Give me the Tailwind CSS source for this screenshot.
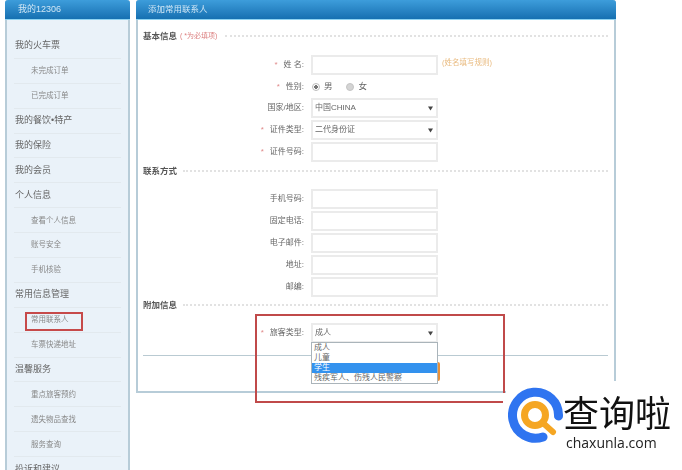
<!DOCTYPE html>
<html lang="zh-CN">
<head>
  <meta charset="UTF-8" />
  <title>添加常用联系人</title>
  <script src="https://cdn.jsdelivr.net/npm/@tailwindcss/browser@4"></script>
</head>
<body class="bg-white font-['Liberation_Sans','Noto_Sans_CJK_SC',sans-serif] text-[8px] text-[#666]">
  <div class="relative w-[682px] h-[470px] overflow-hidden">
    <div class="flex items-start gap-[6px] pl-[5px] blur-[0.55px]">

      <!-- sidebar -->
      <aside class="w-[125px] h-[500px] shrink-0 bg-[#eaf2f9] border-x-2 border-[#b7ccd8] rounded-t-[3px]">
        <div class="-mx-[2px] h-[19px] pl-[13px] flex items-center rounded-t-[3px] bg-gradient-to-b from-[#3d9ddb] to-[#1570b1] text-[9px] text-[#cfe6f5]">我的12306</div>
        <div class="h-[1px] -mx-[2px] bg-[#8fd4f2]"></div>
        <ul class="pt-[14px] px-[7px]">
          <li class="h-[24.9px] flex items-center pl-[1px] text-[9px] border-b border-[#e2e9ee]">我的火车票</li>
          <li class="h-[24.9px] flex items-center pl-[17px] text-[7.5px] text-[#888] border-b border-[#e2e9ee]">未完成订单</li>
          <li class="h-[24.9px] flex items-center pl-[17px] text-[7.5px] text-[#888] border-b border-[#e2e9ee]">已完成订单</li>
          <li class="h-[24.9px] flex items-center pl-[1px] text-[9px] border-b border-[#e2e9ee]">我的餐饮•特产</li>
          <li class="h-[24.9px] flex items-center pl-[1px] text-[9px] border-b border-[#e2e9ee]">我的保险</li>
          <li class="h-[24.9px] flex items-center pl-[1px] text-[9px] border-b border-[#e2e9ee]">我的会员</li>
          <li class="h-[24.9px] flex items-center pl-[1px] text-[9px] border-b border-[#e2e9ee]">个人信息</li>
          <li class="h-[24.9px] flex items-center pl-[17px] text-[7.5px] text-[#888] border-b border-[#e2e9ee]">查看个人信息</li>
          <li class="h-[24.9px] flex items-center pl-[17px] text-[7.5px] text-[#888] border-b border-[#e2e9ee]">账号安全</li>
          <li class="h-[24.9px] flex items-center pl-[17px] text-[7.5px] text-[#888] border-b border-[#e2e9ee]">手机核验</li>
          <li class="h-[24.9px] flex items-center pl-[1px] text-[9px] border-b border-[#e2e9ee]">常用信息管理</li>
          <li class="h-[24.9px] flex items-center pl-[17px] text-[7.5px] text-[#888] border-b border-[#e2e9ee]">常用联系人</li>
          <li class="h-[24.9px] flex items-center pl-[17px] text-[7.5px] text-[#888] border-b border-[#e2e9ee]">车票快递地址</li>
          <li class="h-[24.9px] flex items-center pl-[1px] text-[9px] border-b border-[#e2e9ee]">温馨服务</li>
          <li class="h-[24.9px] flex items-center pl-[17px] text-[7.5px] text-[#888] border-b border-[#e2e9ee]">重点旅客预约</li>
          <li class="h-[24.9px] flex items-center pl-[17px] text-[7.5px] text-[#888] border-b border-[#e2e9ee]">遗失物品查找</li>
          <li class="h-[24.9px] flex items-center pl-[17px] text-[7.5px] text-[#888] border-b border-[#e2e9ee]">服务查询</li>
          <li class="h-[24.9px] flex items-center pl-[1px] text-[9px]">投诉和建议</li>
        </ul>
      </aside>

      <!-- main panel -->
      <main class="w-[480px] h-[393px] shrink-0 border-x-2 border-b-2 border-[#b7ccd8] rounded-t-[3px]">
        <div class="-mx-[2px] h-[19px] pl-[12px] flex items-center rounded-t-[3px] bg-gradient-to-b from-[#3d9ddb] to-[#1570b1] text-[8.5px] text-[#cfe6f5]">添加常用联系人</div>
        <div class="h-[1px] -mx-[2px] bg-[#8fd4f2]"></div>

        <div class="pl-[5px] pr-[6px] pt-[9px]">
          <div class="h-[14px] flex items-center">
            <span class="text-[8.5px] font-bold text-[#555]">基本信息</span>
            <span class="ml-[3px] text-[7px] text-[#dc8080]">( *为必填项)</span>
            <span class="flex-1 ml-[8px] border-t-2 border-dotted border-[#e2e2e2]"></span>
          </div>

          <div class="mt-[12px] flex flex-col gap-[2px]">
            <div class="flex h-[20px] items-center">
              <label class="w-[161px] text-right"><span class="text-[#e08a8a] mr-[6px]">*</span>姓 名:</label>
              <input class="ml-[7px] w-[127px] h-[20px] border-2 border-[#ebebeb]" />
              <span class="ml-[4px] -mt-[5px] text-[7.5px] text-[#e9bb80]">(姓名填写规则)</span>
            </div>
            <div class="flex h-[19px] items-center">
              <label class="w-[161px] text-right"><span class="text-[#e08a8a] mr-[6px]">*</span>性别:</label>
              <input type="radio" name="sex" checked class="ml-[8px] appearance-none w-[8px] h-[8px] rounded-full border border-[#bbb] checked:bg-[radial-gradient(#777_40%,#fff_50%)]" />
              <span class="ml-[4px] text-[8.5px]">男</span>
              <input type="radio" name="sex" class="ml-[13px] appearance-none w-[8px] h-[8px] rounded-full border border-[#c4c4c4] bg-[#d4d4d4]" />
              <span class="ml-[5px] text-[8.5px]">女</span>
            </div>
            <div class="flex h-[20px] items-center">
              <label class="w-[161px] text-right">国家/地区:</label>
              <div class="relative ml-[7px] w-[127px] h-[20px] border-2 border-[#ebebeb] flex items-center pl-[2px] text-[#666]">中国CHINA
                <svg class="absolute right-[3px] top-[6px]" width="5" height="5" viewBox="0 0 5 5"><path d="M0 .5h5L2.5 4.5z" fill="#444"/></svg>
              </div>
            </div>
            <div class="flex h-[20px] items-center">
              <label class="w-[161px] text-right"><span class="text-[#e08a8a] mr-[6px]">*</span>证件类型:</label>
              <div class="relative ml-[7px] w-[127px] h-[20px] border-2 border-[#ebebeb] flex items-center pl-[2px] text-[#666]">二代身份证
                <svg class="absolute right-[3px] top-[6px]" width="5" height="5" viewBox="0 0 5 5"><path d="M0 .5h5L2.5 4.5z" fill="#444"/></svg>
              </div>
            </div>
            <div class="flex h-[20px] items-center">
              <label class="w-[161px] text-right"><span class="text-[#e08a8a] mr-[6px]">*</span>证件号码:</label>
              <input class="ml-[7px] w-[127px] h-[20px] border-2 border-[#ebebeb]" />
            </div>
          </div>

          <div class="mt-[2px] h-[14px] flex items-center">
            <span class="text-[8.5px] font-bold text-[#555]">联系方式</span>
            <span class="flex-1 ml-[6px] border-t-2 border-dotted border-[#e2e2e2]"></span>
          </div>

          <div class="mt-[11px] flex flex-col gap-[2px]">
            <div class="flex h-[20px] items-center">
              <label class="w-[161px] text-right">手机号码:</label>
              <input class="ml-[7px] w-[127px] h-[20px] border-2 border-[#ebebeb]" />
            </div>
            <div class="flex h-[20px] items-center">
              <label class="w-[161px] text-right">固定电话:</label>
              <input class="ml-[7px] w-[127px] h-[20px] border-2 border-[#ebebeb]" />
            </div>
            <div class="flex h-[20px] items-center">
              <label class="w-[161px] text-right">电子邮件:</label>
              <input class="ml-[7px] w-[127px] h-[20px] border-2 border-[#ebebeb]" />
            </div>
            <div class="flex h-[20px] items-center">
              <label class="w-[161px] text-right">地址:</label>
              <input class="ml-[7px] w-[127px] h-[20px] border-2 border-[#ebebeb]" />
            </div>
            <div class="flex h-[20px] items-center">
              <label class="w-[161px] text-right">邮编:</label>
              <input class="ml-[7px] w-[127px] h-[20px] border-2 border-[#ebebeb]" />
            </div>
          </div>

          <div class="mt-[1px] h-[14px] flex items-center">
            <span class="text-[8.5px] font-bold text-[#555]">附加信息</span>
            <span class="flex-1 ml-[6px] border-t-2 border-dotted border-[#e2e2e2]"></span>
          </div>

          <div class="mt-[11px] flex h-[20px] items-center">
            <label class="w-[161px] text-right"><span class="text-[#e08a8a] mr-[6px]">*</span>旅客类型:</label>
            <div class="relative ml-[7px] w-[127px] h-[20px] border-2 border-[#ebebeb] flex items-center pl-[2px] text-[#666]">成人
              <svg class="absolute right-[3px] top-[6px]" width="5" height="5" viewBox="0 0 5 5"><path d="M0 .5h5L2.5 4.5z" fill="#444"/></svg>
              <!-- open dropdown -->
              <ul class="absolute z-10 -left-[2px] top-[17px] w-[127px] h-[42px] bg-white border border-[#aab4ba] text-[8px] leading-[10px] text-[#666]">
                <li class="pl-[2px]">成人</li>
                <li class="pl-[2px]">儿童</li>
                <li class="pl-[2px] bg-[#3392ee] text-white">学生</li>
                <li class="pl-[2px]">残疾军人、伤残人民警察</li>
              </ul>
            </div>
          </div>

          <div class="mt-[12px] border-t border-[#b9cad2]"></div>
          <div class="mt-[6px] ml-[197px] w-[100px] h-[19px] rounded-[2px] bg-[#e8913a]"></div>
        </div>
      </main>
    </div>

    <!-- red annotation boxes -->
    <div class="absolute left-[25px] top-[312px] w-[58px] h-[19px] border-2 border-[#c64a4a]"></div>
    <div class="absolute left-[255px] top-[314px] w-[250px] h-[89px] border-2 border-[#c04a4a]"></div>

    <!-- watermark -->
    <div class="absolute left-[506px] top-[381px] w-[176px] h-[89px] bg-white"></div>
    <div class="absolute left-[503px] top-[393px] w-[179px] h-[77px] bg-white"></div>
    <div class="absolute left-[508px] top-[387px] w-[170px] h-[70px] blur-[0.3px]">
      <svg class="absolute left-0 top-0" width="56" height="56" viewBox="0 0 56 56">
        <path d="M50.5 29A23 23 0 1 0 35 50" fill="none" stroke="#2f74f0" stroke-width="9" stroke-linecap="round"/>
        <circle cx="27" cy="28" r="10.5" fill="none" stroke="#f5a623" stroke-width="7"/>
        <path d="M35 36l10 9" stroke="#f5a623" stroke-width="6" stroke-linecap="round"/>
      </svg>
      <div class="absolute left-[55px] top-[4px] h-[40px] text-[36px] leading-[40px] text-[#111] whitespace-nowrap font-['Noto_Sans_CJK_SC',sans-serif]">查询啦</div>
      <div class="absolute left-[58px] top-[48px] text-[14px] leading-[16px] text-[#222] whitespace-nowrap font-['Open_Sans',sans-serif]">chaxunla.com</div>
    </div>
  </div>
</body>
</html>
